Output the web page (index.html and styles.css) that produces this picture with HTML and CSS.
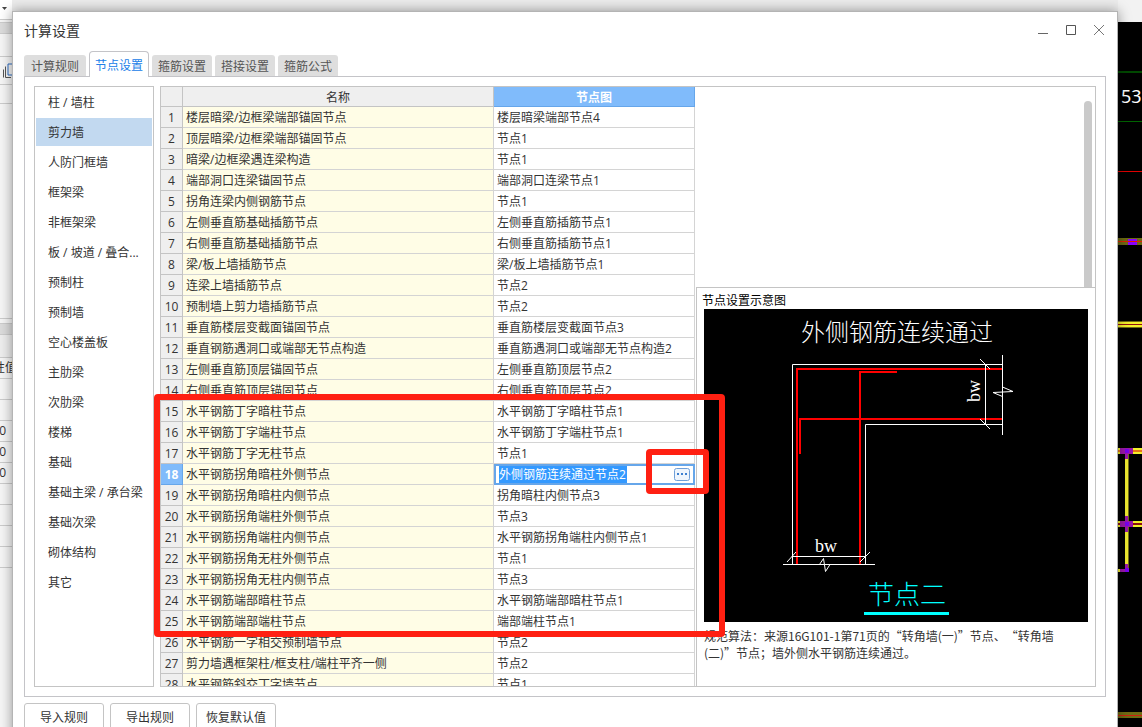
FILE: index.html
```html
<!DOCTYPE html>
<html lang="zh-CN">
<head>
<meta charset="utf-8">
<meta name="viewport" content="width=device-width, initial-scale=1">
<title>计算设置</title>
<link rel="stylesheet" href="styles.css">
</head>
<body>
<div class="app">
  <aside class="app-left">
    <div class="left-tool"><svg width="12" height="19" viewBox="0 0 12 19"><path d="M2 7h5L4.500 10z" fill="#444"/></svg></div>
    <div class="left-band"></div>
    <div class="left-row left-row-a"></div>
    <div class="left-row left-row-b"><svg width="12" height="27" viewBox="0 0 12 27" fill="none"><path d="M12 7H8v11h4" stroke="#2f6fc4"/><path d="M5.500 9.500v11H11M3.500 12.500v8" stroke="#555"/></svg></div>
    <div class="left-row left-row-c"></div>
    <div class="left-row left-row-d"></div>
    <div class="left-band left-band-low"></div>
    <div class="left-row left-row-e"></div>
    <div class="left-row cell cell-head"><span>性值</span></div>
    <div class="left-row cell"></div>
    <div class="left-row cell"></div>
    <div class="left-row cell"><span>0</span></div>
    <div class="left-row cell"><span>0</span></div>
    <div class="left-row cell"><span>0</span></div>
    <div class="left-row cell"></div>
    <div class="left-row cell"></div>
    <div class="left-row cell"></div>
    <div class="left-row cell"></div>
  </aside>
  <div class="app-mid"></div>
  <div class="app-right">
    <svg width="24" height="705" viewBox="0 0 24 705" shape-rendering="crispEdges">
      <rect width="24" height="705" fill="#000"/>
      <path d="M0 50h24" stroke="#004800" stroke-width="2"/>
      <path d="M0 99.500h24" stroke="#006400"/>
      <path d="M0 149.500h24" stroke="#e00000"/>
      <path d="M0 219.500h24" stroke="#6e6a14" stroke-width="7"/>
      <path d="M10 219.500h9" stroke="#8a00ff" stroke-width="6"/>
      <path d="M0 219.500h24" stroke="#e02000"/>
      <path d="M0 302.500h24" stroke="#f4f02a" stroke-width="7"/>
      <path d="M0 299.500h24M0 305.500h24" stroke="#706c14"/>
      <path d="M0 302.500h24" stroke="#901010"/>
      <path d="M0 429h24" stroke="#f4f02a" stroke-width="6"/>
      <path d="M0 429h24" stroke="#e87818" stroke-width="2"/>
      <path d="M8.500 432v117" stroke="#f0ec30" stroke-width="3"/>
      <path d="M10.500 432v117" stroke="#706c14"/>
      <path d="M0 502h24" stroke="#f4f02a" stroke-width="6"/>
      <path d="M0 502h24" stroke="#8a1010" stroke-width="2"/>
      <path d="M2 429h13M2 502h13" stroke="#9b18a8" stroke-width="6"/>
      <path d="M8.500 432v5M8.500 494v16M8.500 542v8M2 548.500h8" stroke="#9b18a8" stroke-width="3"/>
      <path d="M7 429h4M7 502h4M7 548h4" stroke="#7a00f0" stroke-width="4"/>
      <path d="M0 548.500h2" stroke="#f0ec30" stroke-width="3"/>
      <path d="M0 693h24" stroke="#706c14" stroke-width="6"/>
      <path d="M0 693.500h24" stroke="#d02010"/>
      <text x="3" y="81" class="axis-label">53</text>
    </svg>
  </div>
</div>

<main class="dialog" role="dialog" aria-labelledby="dialog-title">
  <header class="titlebar">
    <h1 class="title" id="dialog-title">计算设置</h1>
    <div class="window-controls">
      <button type="button" aria-label="最小化"><svg width="12" height="12" viewBox="0 0 12 12"><path d="M1 9.500h10" stroke="#666"/></svg></button>
      <button type="button" aria-label="最大化"><svg width="12" height="12" viewBox="0 0 12 12"><path d="M1.500 1.500h9v9h-9z" fill="none" stroke="#555"/></svg></button>
      <button type="button" aria-label="关闭"><svg width="12" height="12" viewBox="0 0 12 12"><path d="M1 1l10 10M11 1L1 11" stroke="#777"/></svg></button>
    </div>
  </header>

  <div class="tabs" role="tablist">
    <button class="tab" role="tab" type="button">计算规则</button>
    <button class="tab tab-active" role="tab" type="button" aria-selected="true">节点设置</button>
    <button class="tab" role="tab" type="button">箍筋设置</button>
    <button class="tab" role="tab" type="button">搭接设置</button>
    <button class="tab" role="tab" type="button">箍筋公式</button>
  </div>

  <section class="panel">
    <nav class="categories">
      <button type="button">柱 / 墙柱</button>
      <button type="button" class="current">剪力墙</button>
      <button type="button">人防门框墙</button>
      <button type="button">框架梁</button>
      <button type="button">非框架梁</button>
      <button type="button">板 / 坡道 / 叠合...</button>
      <button type="button">预制柱</button>
      <button type="button">预制墙</button>
      <button type="button">空心楼盖板</button>
      <button type="button">主肋梁</button>
      <button type="button">次肋梁</button>
      <button type="button">楼梯</button>
      <button type="button">基础</button>
      <button type="button">基础主梁 / 承台梁</button>
      <button type="button">基础次梁</button>
      <button type="button">砌体结构</button>
      <button type="button">其它</button>
    </nav>

    <div class="work">
      <div class="content">
        <div class="table-area">
          <table class="nodes">
            <colgroup><col class="col-num"><col class="col-name"><col class="col-node"></colgroup>
            <thead><tr><th></th><th scope="col">名称</th><th scope="col" class="active">节点图</th></tr></thead>
            <tbody>
              <tr><th>1</th><td>楼层暗梁/边框梁端部锚固节点</td><td>楼层暗梁端部节点4</td></tr>
              <tr><th>2</th><td>顶层暗梁/边框梁端部锚固节点</td><td>节点1</td></tr>
              <tr><th>3</th><td>暗梁/边框梁遇连梁构造</td><td>节点1</td></tr>
              <tr><th>4</th><td>端部洞口连梁锚固节点</td><td>端部洞口连梁节点1</td></tr>
              <tr><th>5</th><td>拐角连梁内侧钢筋节点</td><td>节点1</td></tr>
              <tr><th>6</th><td>左侧垂直筋基础插筋节点</td><td>左侧垂直筋插筋节点1</td></tr>
              <tr><th>7</th><td>右侧垂直筋基础插筋节点</td><td>右侧垂直筋插筋节点1</td></tr>
              <tr><th>8</th><td>梁/板上墙插筋节点</td><td>梁/板上墙插筋节点1</td></tr>
              <tr><th>9</th><td>连梁上墙插筋节点</td><td>节点2</td></tr>
              <tr><th>10</th><td>预制墙上剪力墙插筋节点</td><td>节点2</td></tr>
              <tr><th>11</th><td>垂直筋楼层变截面锚固节点</td><td>垂直筋楼层变截面节点3</td></tr>
              <tr><th>12</th><td>垂直钢筋遇洞口或端部无节点构造</td><td>垂直筋遇洞口或端部无节点构造2</td></tr>
              <tr><th>13</th><td>左侧垂直筋顶层锚固节点</td><td>左侧垂直筋顶层节点2</td></tr>
              <tr><th>14</th><td>右侧垂直筋顶层锚固节点</td><td>右侧垂直筋顶层节点2</td></tr>
              <tr><th>15</th><td>水平钢筋丁字暗柱节点</td><td>水平钢筋丁字暗柱节点1</td></tr>
              <tr><th>16</th><td>水平钢筋丁字端柱节点</td><td>水平钢筋丁字端柱节点1</td></tr>
              <tr><th>17</th><td>水平钢筋丁字无柱节点</td><td>节点1</td></tr>
              <tr><th class="active">18</th><td>水平钢筋拐角暗柱外侧节点</td><td class="editing"><div class="editor"><input type="text" value="外侧钢筋连续通过节点2" aria-label="节点图"><button type="button" aria-label="选择节点图"><svg width="16" height="13" viewBox="0 0 16 13"><rect x=".5" y=".5" width="15" height="12" rx="2" fill="#eef5fd" stroke="#6f9fd8"/><path d="M3 5h2v2H3zM7 5h2v2H7zM11 5h2v2h-2z" fill="#3c7fd0"/></svg></button></div></td></tr>
              <tr><th>19</th><td>水平钢筋拐角暗柱内侧节点</td><td>拐角暗柱内侧节点3</td></tr>
              <tr><th>20</th><td>水平钢筋拐角端柱外侧节点</td><td>节点3</td></tr>
              <tr><th>21</th><td>水平钢筋拐角端柱内侧节点</td><td>水平钢筋拐角端柱内侧节点1</td></tr>
              <tr><th>22</th><td>水平钢筋拐角无柱外侧节点</td><td>节点1</td></tr>
              <tr><th>23</th><td>水平钢筋拐角无柱内侧节点</td><td>节点3</td></tr>
              <tr><th>24</th><td>水平钢筋端部暗柱节点</td><td>水平钢筋端部暗柱节点1</td></tr>
              <tr><th>25</th><td>水平钢筋端部端柱节点</td><td>端部端柱节点1</td></tr>
              <tr><th>26</th><td>水平钢筋一字相交预制墙节点</td><td>节点2</td></tr>
              <tr><th>27</th><td>剪力墙遇框架柱/框支柱/端柱平齐一侧</td><td>节点2</td></tr>
              <tr><th>28</th><td>水平钢筋斜交丁字墙节点</td><td>节点1</td></tr>
            </tbody>
          </table>
        </div>

        <div class="side">
          <div class="scroll-space"><div class="scroll-thumb"></div></div>
          <section class="preview">
            <h2>节点设置示意图</h2>
            <svg class="drawing" viewBox="0 0 384 313" role="img" aria-label="外侧钢筋连续通过 节点二">
              <rect width="384" height="313" fill="#000"/>
              <g fill="none" stroke="#f00" stroke-width="2">
                <path d="M93 255V60H298"/>
                <path d="M156 255V63H193"/>
                <path d="M96 145V110H298"/>
              </g>
              <g fill="none" stroke="#fff">
                <path d="M88.500 255V55.500H298"/>
                <path d="M161.500 255V115.500H298"/>
                <path d="M298.500 46V78L309 82.500L289 83.500L298.500 87.500V126M298.500 78V88"/>
                <path d="M281.500 55V116M276 50l10 10M276 110l10 10"/>
                <path d="M88 247.500H162M83 253l9-10M156 253l10-10"/>
                <path d="M79 255.500H115.500L119.500 249.500L121.500 262.500L126 255.500H171M115 255.500H126"/>
              </g>
              <path d="M160 304.500H245" stroke="#0ff" stroke-width="3"/>
              <text x="97" y="32" class="draw-title">外侧钢筋连续通过</text>
              <text x="111" y="243" class="draw-dim">bw</text>
              <text transform="translate(276 93) rotate(-90)" class="draw-dim">bw</text>
              <text x="164" y="295" class="draw-name">节点二</text>
            </svg>
            <p>规范算法：来源16G101-1第71页的“转角墙(一)”节点、“转角墙(二)”节点；墙外侧水平钢筋连续通过。</p>
          </section>
        </div>
      </div>
      <div class="mark mark-rows"></div>
      <div class="mark mark-button"></div>
    </div>
  </section>

  <footer class="actions">
    <button type="button">导入规则</button>
    <button type="button">导出规则</button>
    <button type="button">恢复默认值</button>
  </footer>
</main>
</body>
</html>
```

FILE: styles.css
```css
* { box-sizing: border-box; }

body {
  margin: 0;
  height: 100vh;
  overflow: hidden;
  position: relative;
  font-family: "Open Sans", "Noto Sans CJK SC", sans-serif;
  font-size: 12px;
  color: #333;
  background: #ececec;
}

button, input {
  font: inherit;
  color: inherit;
  margin: 0;
  padding: 0;
  border: 0;
  background: none;
}

svg { display: block; }

/* application behind the dialog */
.app {
  height: 100%;
  display: grid;
  grid-template-columns: 12px 1fr 24px;
}
.app-left { background: #f6f6f6; overflow: hidden; }
.left-tool { height: 20px; border-bottom: 1px solid #ccc; margin-bottom: 2px; background: #fff; }
.left-band { height: 12px; background: #dcdcdc; border-bottom: 1px solid #ccc; border-top: 1px solid #ccc; }
.left-row { border-bottom: 1px solid #ccc; }
.left-row-a { height: 23px; }
.left-row-b { height: 28px; }
.left-row-c { height: 19px; }
.left-row-d { height: 215px; margin-bottom: 4px; }
.left-row-e { height: 23px; background: #eee; }
.cell { height: 21px; line-height: 20px; display: flex; justify-content: flex-end; white-space: nowrap; }
.cell span { padding-right: 6px; }
.cell-head { justify-content: flex-start; }
.cell-head span { margin-left: -7px; padding-right: 0; }
.app-right { padding-top: 22px; background: #f2f2f2; overflow: hidden; }
.axis-label { font-family: "Noto Sans", sans-serif; font-size: 18px; fill: #fff; }

/* dialog */
.dialog {
  position: absolute;
  top: 11px;
  right: 24px;
  bottom: -14px;
  left: 12px;
  display: flex;
  flex-direction: column;
  padding: 0 11px 9px;
  background: #fff;
  border: 1px solid #b4b4b4;
  box-shadow: 0 0 12px rgba(0, 0, 0, .4);
}
.titlebar { height: 36px; margin-bottom: 3px; padding-right: 1px; display: flex; justify-content: space-between; align-items: center; }
.title { margin: 0; font-size: 14px; font-weight: 400; }
.window-controls { display: flex; gap: 16px; }

.tabs { display: flex; align-items: flex-end; gap: 3px; height: 25px; }
.tab {
  height: 21px;
  padding: 0 6px;
  border-radius: 3px 3px 0 0;
  background: #dedede;
  color: #555;
  white-space: nowrap;
}
.tab:first-child { padding: 0 7px; }
.tab-active {
  position: relative;
  z-index: 1;
  height: 26px;
  margin-bottom: -1px;
  padding: 0 5px;
  background: #fff;
  border: 1px solid #c4c4c8;
  border-bottom: 0;
  border-radius: 4px 4px 0 0;
  color: #2080e8;
}

.panel {
  flex: 1;
  min-height: 0;
  display: grid;
  grid-template-columns: 120px minmax(0, 1fr);
  grid-template-rows: minmax(0, 1fr);
  gap: 6px;
  padding: 9px;
  border: 1px solid #c4c4c8;
}
.categories {
  display: flex;
  flex-direction: column;
  gap: 2px;
  padding: 1px;
  border: 1px solid #c4c4c4;
  overflow: hidden;
}
.categories button { flex: none; height: 28px; padding-left: 12px; text-align: left; white-space: nowrap; }
.categories .current { background: #c2d9f0; }

.work { position: relative; min-height: 0; }
.content {
  height: 100%;
  display: grid;
  grid-template-columns: minmax(0, 1fr) 400px;
  grid-template-rows: minmax(0, 1fr);
  border: 1px solid #c4c4c4;
  border-right: 0;
}
.table-area { overflow: hidden; padding-right: 1px; }

.nodes { width: 100%; table-layout: fixed; border-collapse: separate; border-spacing: 0; line-height: 18px; }
.col-num { width: 22px; }
.col-node { width: 201px; }
.nodes th, .nodes td {
  height: 21px;
  padding: 2px 3px 0;
  border-right: 1px solid #d4d4d4;
  border-bottom: 1px solid #d4d4d4;
  text-align: left;
  font-weight: 400;
  white-space: nowrap;
  overflow: hidden;
}
.nodes th { padding: 2px 0 0; text-align: center; background: #efefef; border-color: #c4c4c4; }
.nodes thead th { height: 20px; line-height: 17px; }
.nodes td:nth-child(2) { background: #fffde6; }
.nodes th.active { background: #80bbfb; color: #fff; font-weight: 700; border-color: #66a6ea; }
.nodes td.editing { padding: 0; border: 0; }
.editor {
  height: 21px;
  display: flex;
  align-items: center;
  justify-content: space-between;
  padding: 0 3px;
  border: 2px solid #66a6ea;
}
.editor input { width: 128px; height: 17px; background: #3399ff; color: #fff; }

.side { display: flex; flex-direction: column; min-height: 0; border-right: 1px solid #c4c4c4; }
.scroll-space { flex: 1; display: flex; justify-content: flex-end; padding: 14px 3px 0 0; }
.scroll-thumb { width: 8px; border-radius: 4px 4px 0 0; background: #cacaca; }
.preview {
  height: 399px;
  padding: 4px 7px 0;
  border: 1px solid #c4c4c4;
  border-width: 1px 0 0 1px;
}
.preview h2 { margin: 0 0 0 -2px; font-size: 12px; line-height: 17px; font-weight: 400; color: #000; }
.drawing { width: 384px; height: 313px; }
.preview p {
  margin: 5px 0 0;
  padding-right: 16px;
  line-height: 17px;
  font-family: "Noto Sans CJK SC", sans-serif;
  text-spacing-trim: space-all;
}
.draw-title { font-family: "Noto Sans CJK SC", sans-serif; font-size: 24px; font-weight: 300; fill: #fff; }
.draw-name { font-family: "Noto Sans CJK SC", sans-serif; font-size: 26px; font-weight: 300; fill: #0ff; }
.draw-dim { font-family: "Liberation Serif", serif; font-size: 18px; fill: #fff; }

/* red highlight frames drawn over the table */
.mark { position: absolute; border: 6px solid #ff2012; border-radius: 4px; pointer-events: none; }
.mark-rows { left: -6px; right: 371px; top: 308px; height: 243px; }
.mark-button { right: 387px; width: 63px; top: 363px; height: 45px; }

.actions { display: flex; gap: 6px; padding-top: 6px; }
.actions button { width: 80px; height: 28px; border: 1px solid #c4c4c4; border-radius: 3px; white-space: nowrap; }
```
